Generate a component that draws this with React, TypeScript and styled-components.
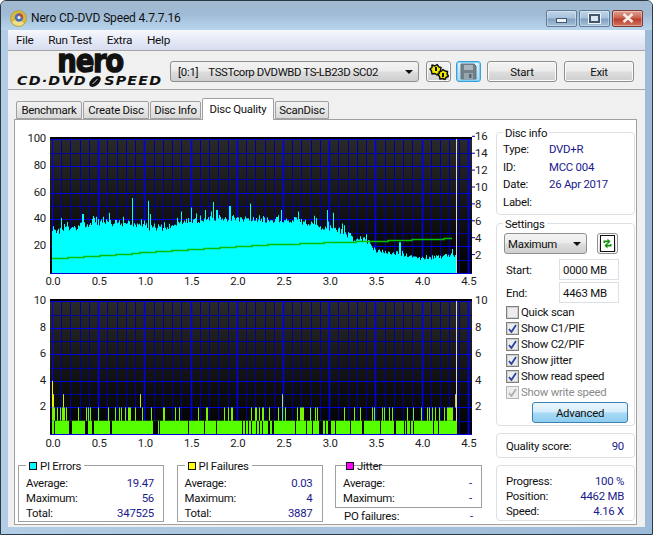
import React from 'react';
import styled, { createGlobalStyle } from 'styled-components';

const GlobalStyle = createGlobalStyle`
    html, body {
        margin: 0;
        padding: 0;
        background: #fff;
    }
    * {
        box-sizing: border-box;
    }
`
const uiFont = `Roboto, "Liberation Sans", sans-serif`;

const Window = styled.div`
    width: 653px;
    height: 535px;
    display: flex;
    flex-direction: column;
    overflow: hidden;
    border: 1px solid #2c3a46;
    border-radius: 6px 6px 0 0;
    background: linear-gradient(90deg, #b4cde6 0%, #a9c3dd 45%, #9dbbd8 100%);
    font-family: ${uiFont};
    font-size: 11.4px;
    letter-spacing: -0.25px;
    color: #111;
`
const TitleBar = styled.div`
    height: 29px;
    flex: none;
    display: flex;
    align-items: center;
    padding: 5px 9px 0 9px;
    background: linear-gradient(180deg, #a3b9cf 0%, #9fbbd6 45%, #b9d5ee 100%);
`
const TitleText = styled.span`
    margin-left: 4px;
    font-size: 12px;
    letter-spacing: -0.15px;
    margin-right: auto;
`
const CaptionButton = styled.div<{ $close?: boolean }>`
    width: 31px;
    height: 17px;
    margin-left: 2px;
    display: flex;
    align-items: center;
    justify-content: center;
    border: 1px solid ${(p) => (p.$close ? '#7d3a33' : '#5f7b97')};
    border-radius: 2px;
    box-shadow: inset 0 0 0 1px rgba(255, 255, 255, 0.35);
    background: ${(p) =>
        p.$close
            ? 'linear-gradient(180deg, #e0a193 0%, #c9604d 48%, #b93c2a 52%, #cf7560 100%)'
            : 'linear-gradient(180deg, #bfd4e8 0%, #a7c1da 48%, #7f9fbe 52%, #a5c2dc 100%)'};
`
const MinGlyph = styled.div`
    width: 11px;
    height: 5px;
    margin-top: 4px;
    background: #eef3f8;
    border: 1px solid #42566b;
`
const MaxGlyph = styled.div`
    width: 11px;
    height: 9px;
    border: 2px solid #42566b;
    background: #dbe6f0;
    box-shadow: 0 0 0 1px #eef3f8;
`
const Client = styled.div`
    width: 637px;
    height: 497px;
    margin-left: 7px;
    flex: none;
    display: flex;
    flex-direction: column;
    background: #f0f0f0;
`
const MenuBar = styled.div`
    height: 20px;
    flex: none;
    display: flex;
    align-items: center;
    padding-left: 8px;
    gap: 14.8px;
    background: linear-gradient(180deg, #f6f8fd 0%, #d7ddf0 100%);
    font-size: 11.8px;
`
const Toolbar = styled.div`
    height: 40px;
    flex: none;
    display: flex;
    align-items: center;
    padding: 3px 11px 0 10px;
    border-top: 1px solid #a5a5a5;
    border-bottom: 1px solid #a5a5a5;
`
const Logo = styled.div`
    width: 144px;
    height: 35px;
    margin-top: -2px;
    flex: none;
    align-self: flex-start;
    display: flex;
    flex-direction: column;
    align-items: center;
`
const LogoWord = styled.div`
    font-family: "DejaVu Sans", sans-serif;
    font-weight: 700;
    font-size: 32px;
    line-height: 18px;
    height: 26px;
    letter-spacing: -1.5px;
    color: #111;
    -webkit-text-stroke: 1.4px #111;
    transform: scaleX(0.86);
`
const LogoLine = styled.div`
    display: flex;
    align-items: center;
    height: 11px;
    font-family: "DejaVu Sans", sans-serif;
    font-weight: 700;
    font-style: italic;
    font-size: 11.5px;
    line-height: 11px;
    letter-spacing: 1px;
    color: #111;
    white-space: nowrap;
    transform: scaleX(1.24);
`
const DriveSelect = styled.div`
    width: 250px;
    height: 21px;
    margin-left: 8px;
    display: flex;
    align-items: center;
    justify-content: space-between;
    padding: 0 5px 0 7px;
    border: 1px solid #8e8f8f;
    border-radius: 3px;
    background: linear-gradient(180deg, #f3f3f3 0%, #ebebeb 48%, #dddddd 52%, #cfcfcf 100%);
    white-space: pre;
`
const DriveSlot = styled.span`
    margin-right: 10px;
`
const DriveName = styled.span`
    margin-right: auto;
    letter-spacing: -0.4px;
`
const Arrow = styled.div`
    width: 0;
    height: 0;
    border-left: 4px solid transparent;
    border-right: 4px solid transparent;
    border-top: 4px solid #111;
`
const IconButton = styled.div<{ $focused?: boolean; $gap?: number }>`
    width: 25px;
    height: 21px;
    flex: none;
    margin-left: ${(p) => p.$gap ?? 0}px;
    display: flex;
    align-items: center;
    justify-content: center;
    border: 1px solid ${(p) => (p.$focused ? '#3c9fd8' : '#8e8f8f')};
    border-radius: 3px;
    background: ${(p) =>
        p.$focused
            ? 'linear-gradient(180deg, #e4f4fc 0%, #c4e5f6 50%, #a6d8f2 100%)'
            : 'linear-gradient(180deg, #f3f3f3 0%, #ebebeb 48%, #dddddd 52%, #cfcfcf 100%)'};
    box-shadow: ${(p) => (p.$focused ? 'inset 0 0 0 1px #7fd0f5' : 'inset 0 0 0 1px #fbfbfb')};
`
const PushButton = styled.div<{ $gap: number }>`
    width: 70px;
    height: 21px;
    flex: none;
    margin-left: ${(p) => p.$gap}px;
    display: flex;
    align-items: center;
    justify-content: center;
    border: 1px solid #8e8f8f;
    border-radius: 3px;
    background: linear-gradient(180deg, #f3f3f3 0%, #ebebeb 48%, #dddddd 52%, #cfcfcf 100%);
    box-shadow: inset 0 0 0 1px #fbfbfb;
`
const TabRow = styled.div`
    height: 29px;
    flex: none;
    display: flex;
    align-items: flex-end;
    padding-left: 8px;
    gap: 1px;
`
const Tab = styled.div<{ $active?: boolean; $width: number }>`
    width: ${(p) => p.$width}px;
    height: ${(p) => (p.$active ? 22 : 18)}px;
    margin-bottom: ${(p) => (p.$active ? -1 : 0)}px;
    padding-bottom: ${(p) => (p.$active ? 2 : 0)}px;
    display: flex;
    align-items: center;
    justify-content: center;
    position: relative;
    z-index: ${(p) => (p.$active ? 2 : 0)};
    border: 1px solid #a0a0a0;
    border-bottom: ${(p) => (p.$active ? 'none' : '1px solid #a0a0a0')};
    border-radius: 2px 2px 0 0;
    background: ${(p) => (p.$active ? '#fff' : 'linear-gradient(180deg, #f2f2f2 0%, #e6e6e6 50%, #d9d9d9 100%)')};
`
const Panel = styled.div`
    width: 623px;
    height: 406px;
    margin-left: 6px;
    flex: none;
    display: flex;
    border: 1px solid #a0a0a0;
    background: #fff;
`
const ChartColumn = styled.div`
    width: 481px;
    flex: none;
    display: flex;
    flex-direction: column;
`
const ChartSvg = styled.svg`
    display: block;
    flex: none;
    font-family: ${uiFont};
    font-size: 11.4px;
    letter-spacing: -0.25px;
`
const StatsRow = styled.div`
    display: grid;
    grid-template-columns: 146px 146px 147px;
    column-gap: 12.5px;
    padding: 5px 0 0 3px;
`
const StatsBox = styled.div`
    position: relative;
    height: 57px;
    padding: 9px 9px 0 7px;
    border: 1px solid #a0a0a0;
`
const JitterBox = styled(StatsBox)`
    height: 43px;
`
const StatsTitle = styled.div<{ $clear?: boolean }>`
    position: absolute;
    top: -7px;
    left: 7px;
    display: flex;
    align-items: center;
    gap: 3px;
    height: 13px;
    padding: 0 3px;
    background: ${(p) => (p.$clear ? 'transparent' : '#fff')};
`
const Swatch = styled.span<{ $color: string }>`
    width: 8px;
    height: 8px;
    border: 1px solid #111;
    background: ${(p) => p.$color};
`
const StatRow = styled.div`
    height: 15.3px;
    display: flex;
    align-items: center;
    justify-content: space-between;
`
const Value = styled.span`
    color: #1a1a8c;
`
const PoRow = styled(StatRow)`
    padding: 1px 9px 0 9px;
`
const SideColumn = styled.div`
    flex: 1;
    display: flex;
    flex-direction: column;
    gap: 7px;
    padding: 12px 1px 0 0;
`
const Group = styled.div<{ $height: number }>`
    position: relative;
    height: ${(p) => p.$height}px;
    flex: none;
    border: 1px solid #dcdfe4;
    border-radius: 4px;
`
const SettingsGroup = styled(Group)`
    margin-top: 1px;
`
const GroupTitle = styled.div`
    position: absolute;
    top: -6px;
    left: 6px;
    height: 13px;
    line-height: 13px;
    padding: 0 2px;
    background: #fff;
`
const InfoList = styled.div`
    padding-top: 7px;
    display: flex;
    flex-direction: column;
`
const InfoRow = styled.div`
    height: 17.7px;
    display: flex;
    align-items: center;
    padding-left: 6px;
`
const InfoLabel = styled.span`
    width: 46px;
`
const SettingsBody = styled.div`
    padding: 9px 0 0 7px;
    display: flex;
    flex-direction: column;
`
const SettingsTop = styled.div`
    display: flex;
    align-items: center;
    gap: 10px;
    margin-bottom: 4px;
`
const SpeedSelect = styled(DriveSelect)`
    width: 83px;
    margin-left: 0;
    padding: 0 5px 0 3px;
`
const RefreshButton = styled(IconButton)`
    width: 21px;
`
const FieldRow = styled.div`
    height: 23px;
    display: flex;
    align-items: center;
    padding-left: 2px;
    justify-content: space-between;
    padding-right: 15px;
`
const FieldInput = styled.div`
    width: 60px;
    height: 21px;
    display: flex;
    align-items: center;
    padding-left: 3px;
    border: 1px solid #dbdfe6;
    background: #fff;
`
const CheckRow = styled.div<{ $disabled?: boolean }>`
    height: 16px;
    display: flex;
    align-items: center;
    gap: 2px;
    padding-left: 2px;
    color: ${(p) => (p.$disabled ? '#8a8a8a' : '#111')};
    &:first-of-type {
        margin: -1px 0 1px;
    }
`
const CheckBox = styled.span<{ $disabled?: boolean }>`
    width: 13px;
    height: 13px;
    display: flex;
    align-items: center;
    justify-content: center;
    border: 1px solid ${(p) => (p.$disabled ? '#b5b5b5' : '#7f7f7f')};
    box-shadow: inset 0 0 0 1px ${(p) => (p.$disabled ? '#efefef' : '#cfcfcf')};
    background: #ececec;
`
const AdvancedButton = styled.div`
    width: 96px;
    height: 21px;
    margin: 2px 0 0 28px;
    display: flex;
    align-items: center;
    justify-content: center;
    border: 1px solid #3c7fb1;
    border-radius: 3px;
    background: linear-gradient(180deg, #ecf7fd 0%, #d4edfb 48%, #a9daf6 52%, #8fcdf0 100%);
`
const ScoreRow = styled.div`
    height: 100%;
    display: flex;
    align-items: center;
    justify-content: space-between;
    padding: 1px 10px 0 9px;
`
const ProgressList = styled.div`
    padding: 7px 10px 0 9px;
`

// small seeded generator so the graph noise stays the same on every load
const makeRandom = (seed: number) => () => {
    seed = (seed * 16807) % 2147483647;
    return (seed - 1) / 2147483646;
};

const X0 = 52;
const PX_PER_GB = 92.4;
const gbToX = (gb: number) => X0 + gb * PX_PER_GB;

const ENVELOPE: [number, number][] = [
    [0, 30], [0.1, 32], [0.3, 35], [0.5, 38], [0.8, 37], [1.0, 34], [1.2, 34], [1.4, 38], [1.7, 41],
    [2.0, 41], [2.3, 39], [2.6, 40], [2.9, 35], [3.1, 32], [3.25, 26], [3.42, 24], [3.47, 17],
    [3.7, 15], [4.0, 11], [4.2, 12], [4.35, 14],
];
const SPIKES: [number, number][] = [
    [0.01, 35], [0.1, 41], [0.33, 44], [0.55, 42], [0.62, 45], [0.77, 42], [0.87, 56], [0.96, 40], [1.04, 54], [1.06, 44],
    [1.4, 46], [1.5, 49], [1.6, 43], [1.66, 47], [1.74, 53], [1.78, 47], [1.92, 50], [2.14, 52], [2.48, 47],
    [2.66, 46], [2.98, 47], [3.04, 45], [3.22, 30], [3.4, 29], [3.76, 23], [4.33, 18],
];

const envelopeAt = (gb: number) => {
    for (let i = 1; i < ENVELOPE.length; i++) {
        const [a, av] = ENVELOPE[i - 1];
        const [b, bv] = ENVELOPE[i];
        if (gb <= b) return av + ((bv - av) * (gb - a)) / (b - a);
    }
    return 13;
};

const buildErrorPath = () => {
    const random = makeRandom(91);
    const zero = 273;
    const scale = 1.338;
    let d = `M${X0} ${zero}`;
    for (let x = X0; x <= 456; x++) {
        const gb = (x - X0) / PX_PER_GB;
        let v = envelopeAt(gb) + (random() - 0.5) * 5 * (gb > 3.45 ? 0.6 : 1);
        if (random() > 0.82) v += random() * 5 * (gb > 3.45 ? 0.4 : 1);
        const spike = SPIKES.find((s) => Math.abs(gbToX(s[0]) - x) < 0.6);
        if (spike) v = spike[1];
        d += `V${(zero - v * scale).toFixed(1)}H${x + 1}`;
    }
    return `${d}V${zero}Z`;
};

const buildSpeedPath = () => {
    const zero = 273;
    let d = '';
    for (let x = 52; x <= 447; x += 8) {
        const gb = (x - X0) / PX_PER_GB;
        const v = gb < 2.2 ? 11 + (gb / 2.2) * 10 : 21 + ((gb - 2.2) / 2.15) * 5.2;
        const y = Math.round(zero - v * 1.338) + 0.5;
        d += `${d ? 'L' : 'M'}${x} ${y}H${x + 8}`;
    }
    return d;
};

// pixel columns of the PI failures graph, read off the reference
const LOW_GAPS: [number, number][] = [
    [54, 55], [69, 72], [85, 87], [87, 88], [92, 93], [93, 94], [110, 112], [153, 158], [159, 160],
    [188, 189], [204, 205], [216, 217], [242, 243], [245, 246], [248, 249], [251, 252], [256, 257], [259, 260], [262, 263], [268, 270], [272, 274],
    [295, 296], [306, 307], [312, 313], [319, 323], [325, 326], [328, 331], [335, 336], [350, 351], [362, 364], [380, 381], [394, 396], [404, 405], [406, 407], [410, 411], [413, 414], [433, 434], [438, 439],
];
const MID_BARS: [number, number][] = [
    [52, 55], [57, 58], [60, 61], [62, 65], [66, 67], [78, 79], [86, 87], [88, 89], [90, 91], [98, 99], [108, 109], [115, 116], [119, 120],
    [121, 122], [125, 126], [128, 131], [135, 136], [142, 143], [151, 152], [163, 165], [175, 176], [179, 180], [198, 199], [206, 208], [224, 225],
    [228, 229], [231, 233], [251, 252], [255, 257], [259, 260], [262, 264], [269, 270], [278, 279], [282, 283], [285, 286],
    [297, 298], [300, 304], [310, 311], [315, 316], [317, 318], [344, 345], [354, 355], [360, 361], [372, 373], [374, 375], [382, 383], [384, 385],
    [389, 390], [392, 393], [407, 408], [413, 414], [421, 422], [427, 428], [429, 430], [432, 433], [435, 436], [439, 440], [444, 445], [447, 453],
];
const TALL_BARS: [number, number, string][] = [
    [53, 54, '#d8f500'], [63, 64, '#c8f000'], [140, 141, '#c8f000'], [282, 283, '#b8f000'], [455, 456, '#c8d060'],
];

const VerticalGrid: React.FC<{ top: number; bottom: number }> = ({ top, bottom }) => {
    const lines = [];
    for (let i = 0; i <= 45; i++) {
        const x = Math.round(gbToX(i / 10)) + 0.5;
        const major = i % 5 === 0;
        lines.push(
            <line key={i} x1={x} x2={x} y1={top} y2={bottom} stroke={major ? '#0000f0' : '#00009c'} strokeWidth={major ? (i === 0 ? 1 : 1.6) : 1} />
        );
    }
    return <>{lines}</>;
};

const xLabels = ['0.0', '0.5', '1.0', '1.5', '2.0', '2.5', '3.0', '3.5', '4.0', '4.5'];

const AxisLabels: React.FC<{ y: number }> = ({ y }) => (
    <>
        {xLabels.map((label, i) => (
            <text key={label} x={gbToX(i / 2) + 1} y={y} textAnchor="middle" fill="#222">
                {label}
            </text>
        ))}
    </>
);

const TopChart: React.FC = () => {
    const rows = [];
    for (let v = 0; v <= 100; v += 10) {
        const y = Math.round(273 - v * 1.338) + 0.5;
        rows.push(<line key={v} x1={50} x2={472} y1={y} y2={y} stroke={v % 20 === 0 ? '#0000e0' : '#00009c'} />);
    }
    return (
        <ChartSvg width={480} height={170} viewBox="15 120 480 170">
            <defs>
                <linearGradient id="plotShade" x1="0" y1="0" x2="0" y2="1">
                    <stop offset="0" stopColor="#2a2a2a" />
                    <stop offset="1" stopColor="#000" />
                </linearGradient>
            </defs>
            <rect x={50} y={137} width={422} height={137} fill="url(#plotShade)" />
            <rect x={50} y={137} width={422} height={2} fill="#000" />
            <VerticalGrid top={139} bottom={273} />
            {rows}
            <path d={buildErrorPath()} fill="#00ffff" />
            <path d={buildSpeedPath()} fill="none" stroke="#00c000" strokeWidth={1.5} />
            <rect x={456} y={139} width={1} height={134} fill="#d8d8d8" />
            {[100, 80, 60, 40, 20].map((v) => (
                <text key={v} x={46} y={Math.round(273 - v * 1.338) + 3} textAnchor="end" fill="#222">
                    {v}
                </text>
            ))}
            {[16, 14, 12, 10, 8, 6, 4, 2].map((v) => (
                <g key={v}>
                    <line x1={472} x2={475} y1={273 - v * 8.45 - 1.5} y2={273 - v * 8.45 - 1.5} stroke="#0000c0" />
                    <text x={475} y={273 - v * 8.45 + 2.5} fill="#222">
                        {v}
                    </text>
                </g>
            ))}
            <AxisLabels y={285} />
        </ChartSvg>
    );
};

const BottomChart: React.FC = () => {
    const base = 434;
    const unit = 13.27;
    const rows = [];
    for (let v = 0; v <= 10; v++) {
        const y = Math.round(base - v * unit) + 0.5;
        rows.push(<line key={v} x1={50} x2={472} y1={y} y2={y} stroke={v % 2 === 0 ? '#0000e0' : '#00009c'} />);
    }
    return (
        <ChartSvg width={480} height={170} viewBox="15 290 480 170">
            <rect x={50} y={299} width={422} height={136} fill="url(#plotShade)" />
            <rect x={50} y={299} width={422} height={2} fill="#000" />
            <VerticalGrid top={301} bottom={434} />
            {rows}
            <rect x={52} y={base - unit} width={405} height={unit} fill="#55ff00" />
            {LOW_GAPS.map(([a, b], i) => (
                <rect key={i} x={a} y={base - unit} width={b - a} height={unit} fill="#050505" />
            ))}
            {MID_BARS.map(([a, b], i) => (
                <rect key={i} x={a} y={base - 2 * unit} width={b - a} height={unit} fill="#78f500" />
            ))}
            <rect x={52} y={base - 4 * unit} width={1} height={2 * unit} fill="#f4f400" />
            {TALL_BARS.map(([a, b, color], i) => (
                <rect key={i} x={a} y={base - 3 * unit} width={b - a} height={unit} fill={color} />
            ))}
            <rect x={456} y={301} width={1} height={120} fill="#d8d8d8" />
            {[10, 8, 6, 4, 2].map((v) => (
                <g key={v}>
                    <text x={46} y={Math.round(base - v * unit) + 3} textAnchor="end" fill="#222">
                        {v}
                    </text>
                    <text x={475} y={Math.round(base - v * unit) + 3} fill="#222">
                        {v}
                    </text>
                </g>
            ))}
            <AxisLabels y={447} />
        </ChartSvg>
    );
};

const Tick: React.FC<{ color?: string }> = ({ color = '#2f3f9f' }) => (
    <svg width="9" height="9" viewBox="0 0 9 9">
        <path d="M1 5l2.4 3L8 1" fill="none" stroke={color} strokeWidth="1.8" />
    </svg>
);

const DiscIcon: React.FC = () => (
    <svg width="17" height="17" viewBox="0 0 17 17">
        <circle cx="8.5" cy="8.5" r="8" fill="#d9b93a" stroke="#a98f2a" strokeWidth="0.6" />
        <path d="M2 12a7.5 7.5 0 0 0 12 1.5L8.5 8.5Z" fill="#f1e08a" />
        <circle cx="9" cy="7.5" r="4.2" fill="#4a6fc0" />
        <path d="M9 3.3a4.2 4.2 0 0 1 4.2 4.2H9Z" fill="#d04a3a" />
        <circle cx="9" cy="7.5" r="1.6" fill="#eef0f5" />
    </svg>
);

const NutsIcon: React.FC = () => (
    <svg width="20" height="18" viewBox="0 0 20 18">
        <g stroke="#111" strokeWidth="1.5" fill="#f2ea00" strokeLinejoin="round">
            <path d="M3 2l3 1 2-1.5 2 2.5 2 .5-.5 3 1 2-3 1-1.500 1.500-2-1.500-3 .5-.5-3L1 6l2-1.500Z" />
            <path d="M10 9l2.500-1 1.500-1.500 2 1.500 2.500.5-.5 2.500 1.500 2-2.500 1.500-1 2-2.500-1-2.500.5-.5-2.500-1.500-2 1.500-1.500Z" />
        </g>
        <rect x="6" y="4" width="2" height="4" fill="#111" />
        <rect x="13" y="10" width="2" height="4" fill="#111" />
    </svg>
);

const SaveIcon: React.FC = () => (
    <svg width="17" height="17" viewBox="0 0 17 17">
        <path d="M1 1h13l2 2v13H1Z" fill="#71808b" stroke="#66737d" />
        <rect x="4" y="2" width="9" height="5" fill="#aab5bc" />
        <rect x="4" y="10" width="9" height="6" fill="#98a4ac" />
        <rect x="9" y="11" width="2.5" height="4" fill="#5b6770" />
    </svg>
);

const RefreshIcon: React.FC = () => (
    <svg width="15" height="17" viewBox="0 0 15 17">
        <rect x="0.5" y="0.5" width="14" height="16" fill="#fff" stroke="#111" />
        <path d="M3.500 8V5.500h4V3.500l3 3-3 3V7.200H5V8Z" fill="#109010" />
        <path d="M11.500 9v2.500h-4v2l-3-3 3-3v2.300H10V9Z" fill="#109010" />
    </svg>
);

const StatsContent: React.FC<{ rows: [string, string][] }> = ({ rows }) => (
    <>
        {rows.map(([label, value]) => (
            <StatRow key={label}>
                <span>{label}</span>
                <Value>{value}</Value>
            </StatRow>
        ))}
    </>
);

const checks = [
    { label: 'Quick scan', checked: false },
    { label: 'Show C1/PIE', checked: true },
    { label: 'Show C2/PIF', checked: true },
    { label: 'Show jitter', checked: true },
    { label: 'Show read speed', checked: true },
    { label: 'Show write speed', checked: true, disabled: true },
];

const App: React.FC = () => {
    return (
        <Window>
            <GlobalStyle />
            <TitleBar>
                <DiscIcon />
                <TitleText>Nero CD-DVD Speed 4.7.7.16</TitleText>
                <CaptionButton><MinGlyph /></CaptionButton>
                <CaptionButton><MaxGlyph /></CaptionButton>
                <CaptionButton $close>
                    <svg width="14" height="10" viewBox="0 0 14 10">
                        <path d="M2.500 1l9 8M11.500 1l-9 8" stroke="#f6ece8" strokeWidth="2.600" />
                    </svg>
                </CaptionButton>
            </TitleBar>
            <Client>
                <MenuBar>
                    <span>File</span>
                    <span>Run Test</span>
                    <span>Extra</span>
                    <span>Help</span>
                </MenuBar>
                <Toolbar>
                    <Logo>
                        <LogoWord>nero</LogoWord>
                        <LogoLine>
                            CD·DVD
                            <svg width="14" height="11" viewBox="0 0 14 11">
                                <ellipse cx="7" cy="5.500" rx="3.600" ry="6.200" transform="rotate(35 7 5.500)" fill="#111" />
                                <path d="M5 8l4-5" stroke="#f0f0f0" strokeWidth="0.800" />
                            </svg>
                            SPEED
                        </LogoLine>
                    </Logo>
                    <DriveSelect>
                        <DriveSlot>[0:1]</DriveSlot>
                        <DriveName>TSSTcorp DVDWBD TS-LB23D SC02</DriveName>
                        <Arrow />
                    </DriveSelect>
                    <IconButton $gap={7}><NutsIcon /></IconButton>
                    <IconButton $focused $gap={5}><SaveIcon /></IconButton>
                    <PushButton $gap={6}>Start</PushButton>
                    <PushButton $gap={7}>Exit</PushButton>
                </Toolbar>
                <TabRow>
                    <Tab $width={66}>Benchmark</Tab>
                    <Tab $width={66}>Create Disc</Tab>
                    <Tab $width={51}>Disc Info</Tab>
                    <Tab $width={72} $active>Disc Quality</Tab>
                    <Tab $width={54}>ScanDisc</Tab>
                </TabRow>
                <Panel>
                    <ChartColumn>
                        <TopChart />
                        <BottomChart />
                        <StatsRow>
                            <StatsBox>
                                <StatsTitle><Swatch $color="#00ffff" />PI Errors</StatsTitle>
                                <StatsContent rows={[['Average:', '19.47'], ['Maximum:', '56'], ['Total:', '347525']]} />
                            </StatsBox>
                            <StatsBox>
                                <StatsTitle><Swatch $color="#ffff00" />PI Failures</StatsTitle>
                                <StatsContent rows={[['Average:', '0.03'], ['Maximum:', '4'], ['Total:', '3887']]} />
                            </StatsBox>
                            <div>
                                <JitterBox>
                                    <StatsTitle $clear><Swatch $color="#ff00ff" />Jitter</StatsTitle>
                                    <StatsContent rows={[['Average:', '-'], ['Maximum:', '-']]} />
                                </JitterBox>
                                <PoRow>
                                    <span>PO failures:</span>
                                    <Value>-</Value>
                                </PoRow>
                            </div>
                        </StatsRow>
                    </ChartColumn>
                    <SideColumn>
                        <Group $height={83}>
                            <GroupTitle>Disc info</GroupTitle>
                            <InfoList>
                                <InfoRow><InfoLabel>Type:</InfoLabel><Value>DVD+R</Value></InfoRow>
                                <InfoRow><InfoLabel>ID:</InfoLabel><Value>MCC 004</Value></InfoRow>
                                <InfoRow><InfoLabel>Date:</InfoLabel><Value>26 Apr 2017</Value></InfoRow>
                                <InfoRow><InfoLabel>Label:</InfoLabel></InfoRow>
                            </InfoList>
                        </Group>
                        <SettingsGroup $height={203}>
                            <GroupTitle>Settings</GroupTitle>
                            <SettingsBody>
                                <SettingsTop>
                                    <SpeedSelect>
                                        <span>Maximum</span>
                                        <Arrow />
                                    </SpeedSelect>
                                    <RefreshButton><RefreshIcon /></RefreshButton>
                                </SettingsTop>
                                <FieldRow>
                                    <span>Start:</span>
                                    <FieldInput>0000 MB</FieldInput>
                                </FieldRow>
                                <FieldRow>
                                    <span>End:</span>
                                    <FieldInput>4463 MB</FieldInput>
                                </FieldRow>
                                {checks.map((c) => (
                                    <CheckRow key={c.label} $disabled={c.disabled}>
                                        <CheckBox $disabled={c.disabled}>
                                            {c.checked && <Tick color={c.disabled ? '#b0b0b0' : undefined} />}
                                        </CheckBox>
                                        {c.label}
                                    </CheckRow>
                                ))}
                                <AdvancedButton>Advanced</AdvancedButton>
                            </SettingsBody>
                        </SettingsGroup>
                        <Group $height={25}>
                            <ScoreRow>
                                <span>Quality score:</span>
                                <Value>90</Value>
                            </ScoreRow>
                        </Group>
                        <Group $height={56}>
                            <ProgressList>
                                <StatRow><span>Progress:</span><Value>100 %</Value></StatRow>
                                <StatRow><span>Position:</span><Value>4462 MB</Value></StatRow>
                                <StatRow><span>Speed:</span><Value>4.16 X</Value></StatRow>
                            </ProgressList>
                        </Group>
                    </SideColumn>
                </Panel>
            </Client>
        </Window>
    );
};

export default App;
